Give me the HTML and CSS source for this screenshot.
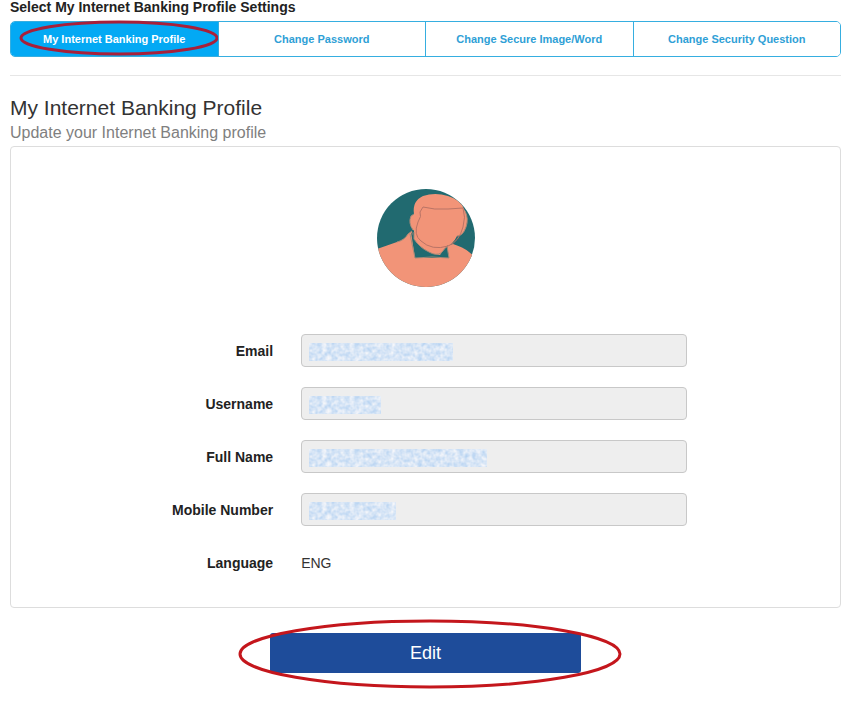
FILE: index.html
```html
<!DOCTYPE html>
<html lang="en">
<head>
    <meta charset="UTF-8">
    <meta name="viewport" content="width=device-width, initial-scale=1.0">
    <title>My Internet Banking Profile</title>
    <link rel="stylesheet" href="styles.css">
</head>
<body>
    <!-- Grain used by the masked values -->
    <svg class="defs" width="0" height="0" aria-hidden="true">
        <filter id="grain" x="0" y="0" width="100%" height="100%" color-interpolation-filters="sRGB">
            <feTurbulence type="fractalNoise" baseFrequency="0.22" numOctaves="2" seed="4"/>
            <feColorMatrix values="0.35 0 0 0 0.67  0.2 0 0 0 0.8  0.05 0 0 0 0.94  0 0 0 0 1"/>
        </filter>
    </svg>

    <header>
        <h2 class="settings-title">Select My Internet Banking Profile Settings</h2>
        <nav class="tabs">
            <button type="button" class="tab active">
                My Internet Banking Profile
                <svg class="ring tab-ring" viewBox="0 0 200 36" preserveAspectRatio="none" aria-hidden="true">
                    <ellipse cx="100" cy="18" rx="98" ry="16"/>
                </svg>
            </button>
            <button type="button" class="tab">Change Password</button>
            <button type="button" class="tab">Change Secure Image/Word</button>
            <button type="button" class="tab">Change Security Question</button>
        </nav>
    </header>

    <main class="profile">
        <h1 class="profile-title">My Internet Banking Profile</h1>
        <p class="profile-subtitle">Update your Internet Banking profile</p>

        <form>
            <div class="card">
                <svg class="avatar" viewBox="0 0 98 98" aria-hidden="true">
                    <clipPath id="avatarClip"><circle cx="49" cy="49" r="49"/></clipPath>
                    <g clip-path="url(#avatarClip)">
                        <rect width="98" height="98" fill="#216a70"/>
                        <path d="M0 60 L20 53 Q27 51 31 45 L35 42 L39 69 L72 69 L70 57 L76 55 Q86 58 92 63 L98 68 V98 H0 Z" fill="#f29478"/>
                        <path d="M34 43 L38 69 L72 69 L70 57 L62 52 L38 50 Z" fill="#216a70"/>
                        <path d="M37 41 L37 50 Q42 58 52 63 Q57 66 63 66 L71 55 L78 47 Z" fill="#f29478"/>
                        <path d="M36 41 Q31 34 34 27 L37 25 Q35 12 46 7 Q58 3 71 7 Q84 11 87 20 Q92 28 89 38 Q86 47 80 47 Q76 56 66 60 Q53 62 44 53 Q38 48 38 42 Z" fill="#f29478"/>
                        <path d="M20 53 Q28 51 31 45 L35 42 M33 45 L38 69 Q55 67 72 69 L70 57 M37 43 L37 50 Q43 59 52 63 Q59 67 64 64 L71 56 M80 47 Q86 47 89 38 Q92 30 88 22 M36 41 Q31 34 34 27 L37 25" fill="none" stroke="#a58a78" stroke-width="1"/>
                        <path d="M46 18 Q57 21 71 20 L86 19 Q89 28 86 38 Q82 53 71 57 Q55 62 44 52 Q36 46 41 33 Q45 27 43 23 Z" fill="none" stroke="#b97466" stroke-width="1"/>
                    </g>
                </svg>

                <div class="field">
                    <label for="email">Email</label>
                    <div class="control">
                        <input type="text" id="email" readonly>
                        <svg class="mask mask-email" aria-hidden="true"><rect width="100%" height="100%" filter="url(#grain)"/></svg>
                    </div>
                </div>
                <div class="field">
                    <label for="username">Username</label>
                    <div class="control">
                        <input type="text" id="username" readonly>
                        <svg class="mask mask-username" aria-hidden="true"><rect width="100%" height="100%" filter="url(#grain)"/></svg>
                    </div>
                </div>
                <div class="field">
                    <label for="fullName">Full Name</label>
                    <div class="control">
                        <input type="text" id="fullName" readonly>
                        <svg class="mask mask-name" aria-hidden="true"><rect width="100%" height="100%" filter="url(#grain)"/></svg>
                    </div>
                </div>
                <div class="field">
                    <label for="mobile">Mobile Number</label>
                    <div class="control">
                        <input type="text" id="mobile" readonly>
                        <svg class="mask mask-mobile" aria-hidden="true"><rect width="100%" height="100%" filter="url(#grain)"/></svg>
                    </div>
                </div>
                <div class="field">
                    <label for="language">Language</label>
                    <output class="control" id="language">ENG</output>
                </div>
            </div>

            <div class="actions">
                <button type="button" class="edit-btn">
                    Edit
                    <svg class="ring edit-ring" viewBox="0 0 384 71" preserveAspectRatio="none" aria-hidden="true">
                        <ellipse cx="192" cy="35" rx="190" ry="33"/>
                    </svg>
                </button>
            </div>
        </form>
    </main>
</body>
</html>
```

FILE: styles.css
```css
* {
    margin: 0;
    padding: 0;
    box-sizing: border-box;
}

body {
    padding: 0 8px 0 10px;
    background-color: #fff;
    color: #333;
    font-family: "Liberation Sans", Arial, sans-serif;
    font-size: 14px;
    line-height: 20px;
}

button,
input {
    font-family: inherit;
}

.defs {
    position: absolute;
}

header {
    padding-bottom: 18px;
    border-bottom: 1px solid #e6e6e6;
}

.settings-title {
    margin-bottom: 7px;
    font-size: 14px;
    line-height: 14px;
    color: #222;
}

/* Tabs */
.tabs {
    display: flex;
    border: 1px solid #36aee0;
    border-radius: 5px;
}

.tab {
    position: relative;
    flex: 1;
    height: 34px;
    border: none;
    border-left: 1px solid #36aee0;
    background-color: #fff;
    color: #2f9fd6;
    font-size: 11px;
    font-weight: bold;
    cursor: pointer;
}

.tab:first-child {
    border-left: none;
}

.tab:last-child {
    border-radius: 0 4px 4px 0;
}

.tab.active {
    background-color: #03a9f4;
    border-radius: 4px 0 0 4px;
    color: #fff;
}

/* Red marker rings */
.ring {
    position: absolute;
    overflow: visible;
    pointer-events: none;
}

.ring ellipse {
    fill: none;
    stroke: #c4161c;
    stroke-width: 3;
}

.tab-ring {
    top: -2px;
    left: 8px;
    width: 200px;
    height: 36px;
}

.tab-ring ellipse {
    stroke: #a8203a;
}

.edit-ring {
    top: -14px;
    left: -32px;
    width: 384px;
    height: 71px;
}

/* Profile */
.profile {
    padding-top: 19px;
}

.profile-title {
    font-size: 21px;
    font-weight: normal;
    line-height: 26px;
}

.profile-subtitle {
    margin-bottom: 1px;
    color: #808080;
    font-size: 16px;
    line-height: 24px;
}

.card {
    display: flex;
    flex-direction: column;
    gap: 20px;
    padding: 42px 0 28px;
    border: 1px solid #ddd;
    border-radius: 4px;
}

.avatar {
    display: block;
    width: 98px;
    height: 98px;
    margin: 0 auto 27px;
}

.field {
    display: flex;
    align-items: center;
    min-height: 33px;
}

.field label {
    width: 35%;
    padding-right: 28px;
    color: #222;
    font-weight: bold;
    text-align: right;
}

.control {
    position: relative;
    width: 46.5%;
}

.control input {
    display: block;
    width: 100%;
    height: 33px;
    padding: 6px 8px;
    border: 1px solid #c8c8c8;
    border-radius: 4px;
    background-color: #eee;
    font-size: 14px;
}

.mask {
    position: absolute;
    top: 9px;
    left: 8px;
    height: 18px;
}

.mask-email { width: 144px; }
.mask-username { width: 72px; }
.mask-name { width: 178px; }
.mask-mobile { width: 87px; }

.actions {
    padding: 25px 0 30px;
    text-align: center;
}

.edit-btn {
    position: relative;
    width: 37.5%;
    height: 40px;
    border: none;
    border-radius: 3px;
    background-color: #1e4c9a;
    color: #fff;
    font-size: 18px;
    cursor: pointer;
}
```
